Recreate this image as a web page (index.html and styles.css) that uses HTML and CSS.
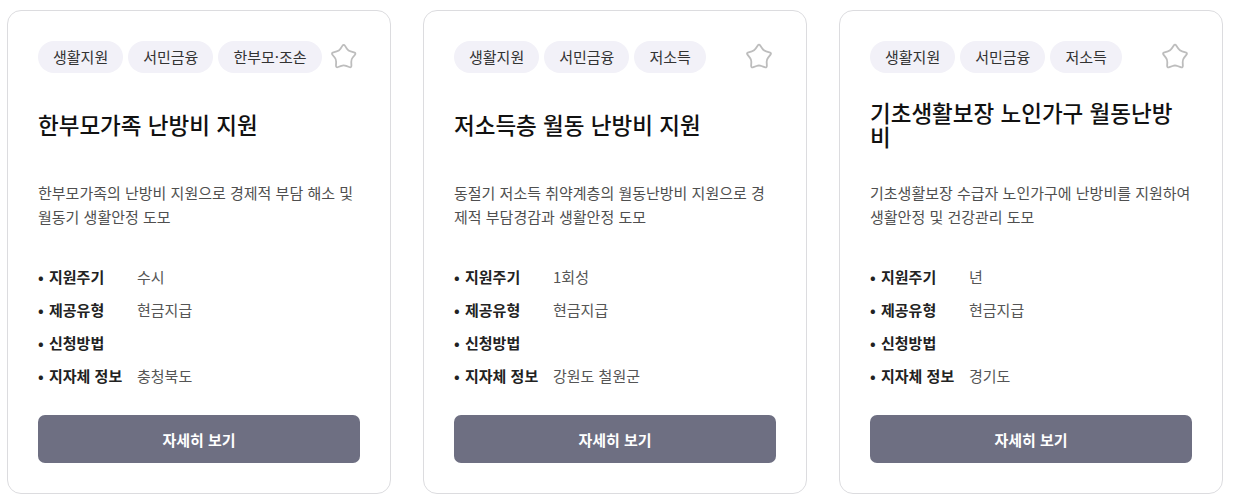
FILE: index.html
```html
<!DOCTYPE html>
<html lang="ko">
<head>
<meta charset="utf-8">
<link rel="stylesheet" href="styles.css">
</head>
<body>
<div class="cards">
  <div class="card">
    <div class="tags">
      <span class="tag">생활지원</span><span class="tag">서민금융</span><span class="tag">한부모·조손</span>
      <svg class="star" viewBox="0 0 30 30"><path d="M13.77 5.90 Q15 4 16.23 5.90 L17.88 8.44 Q19.11 10.34 21.30 10.93 L24.22 11.71 Q26.41 12.29 24.99 14.05 L23.09 16.40 Q21.66 18.16 21.78 20.43 L21.93 23.45 Q22.05 25.71 19.94 24.90 L17.12 23.81 Q15 23 12.88 23.81 L10.06 24.90 Q7.95 25.71 8.07 23.45 L8.22 20.43 Q8.34 18.16 6.91 16.40 L5.01 14.05 Q3.59 12.29 5.78 11.71 L8.70 10.93 Q10.89 10.34 12.12 8.44 Z"/></svg>
    </div>
    <div class="title-box"><h3 class="title">한부모가족 난방비 지원</h3></div>
    <p class="desc">한부모가족의 난방비 지원으로 경제적 부담 해소 및 월동기 생활안정 도모</p>
    <ul class="info">
      <li><span class="label">지원주기</span><span class="value">수시</span></li>
      <li><span class="label">제공유형</span><span class="value">현금지급</span></li>
      <li><span class="label">신청방법</span><span class="value"></span></li>
      <li><span class="label">지자체 정보</span><span class="value">충청북도</span></li>
    </ul>
    <button class="btn">자세히 보기</button>
  </div>
  <div class="card">
    <div class="tags">
      <span class="tag">생활지원</span><span class="tag">서민금융</span><span class="tag">저소득</span>
      <svg class="star" viewBox="0 0 30 30"><path d="M13.77 5.90 Q15 4 16.23 5.90 L17.88 8.44 Q19.11 10.34 21.30 10.93 L24.22 11.71 Q26.41 12.29 24.99 14.05 L23.09 16.40 Q21.66 18.16 21.78 20.43 L21.93 23.45 Q22.05 25.71 19.94 24.90 L17.12 23.81 Q15 23 12.88 23.81 L10.06 24.90 Q7.95 25.71 8.07 23.45 L8.22 20.43 Q8.34 18.16 6.91 16.40 L5.01 14.05 Q3.59 12.29 5.78 11.71 L8.70 10.93 Q10.89 10.34 12.12 8.44 Z"/></svg>
    </div>
    <div class="title-box"><h3 class="title">저소득층 월동 난방비 지원</h3></div>
    <p class="desc">동절기 저소득 취약계층의 월동난방비 지원으로 경제적 부담경감과 생활안정 도모</p>
    <ul class="info">
      <li><span class="label">지원주기</span><span class="value">1회성</span></li>
      <li><span class="label">제공유형</span><span class="value">현금지급</span></li>
      <li><span class="label">신청방법</span><span class="value"></span></li>
      <li><span class="label">지자체 정보</span><span class="value">강원도 철원군</span></li>
    </ul>
    <button class="btn">자세히 보기</button>
  </div>
  <div class="card">
    <div class="tags">
      <span class="tag">생활지원</span><span class="tag">서민금융</span><span class="tag">저소득</span>
      <svg class="star" viewBox="0 0 30 30"><path d="M13.77 5.90 Q15 4 16.23 5.90 L17.88 8.44 Q19.11 10.34 21.30 10.93 L24.22 11.71 Q26.41 12.29 24.99 14.05 L23.09 16.40 Q21.66 18.16 21.78 20.43 L21.93 23.45 Q22.05 25.71 19.94 24.90 L17.12 23.81 Q15 23 12.88 23.81 L10.06 24.90 Q7.95 25.71 8.07 23.45 L8.22 20.43 Q8.34 18.16 6.91 16.40 L5.01 14.05 Q3.59 12.29 5.78 11.71 L8.70 10.93 Q10.89 10.34 12.12 8.44 Z"/></svg>
    </div>
    <div class="title-box"><h3 class="title">기초생활보장 노인가구 월동난방비</h3></div>
    <p class="desc">기초생활보장 수급자 노인가구에 난방비를 지원하여 생활안정 및 건강관리 도모</p>
    <ul class="info">
      <li><span class="label">지원주기</span><span class="value">년</span></li>
      <li><span class="label">제공유형</span><span class="value">현금지급</span></li>
      <li><span class="label">신청방법</span><span class="value"></span></li>
      <li><span class="label">지자체 정보</span><span class="value">경기도</span></li>
    </ul>
    <button class="btn">자세히 보기</button>
  </div>
</div>
</body>
</html>
```

FILE: styles.css
```css
* { box-sizing: border-box; }
body {
  margin: 0;
  background: #fff;
  font-family: "Noto Sans CJK KR", "Noto Sans", sans-serif;
  color: #222;
}
.cards {
  display: grid;
  grid-template-columns: repeat(3, 384px);
  gap: 32px;
  padding: 10px 0 0 7px;
}
.card {
  border: 1px solid #dcdcdf;
  border-radius: 14px;
  padding: 30px 30px 30px 30px;
  display: flex;
  flex-direction: column;
  background: #fff;
}
.tags {
  display: flex;
  align-items: center;
  gap: 5px;
  height: 32px;
}
.tag {
  height: 32px;
  line-height: 32px;
  padding: 0 15px;
  border-radius: 16px;
  background: #f2f1f8;
  font-size: 15px;
  color: #333;
  white-space: nowrap;
}
.star {
  margin-left: auto;
  width: 34px;
  height: 34px;
  margin-top: -3px;
  fill: none;
  stroke: #bdbdbd;
  stroke-width: 1.6;
  stroke-linejoin: round;
}
.title-box {
  margin-top: 20px;
  height: 62px;
  display: flex;
  align-items: center;
}
.title {
  margin: 0;
  font-size: 22.5px;
  line-height: 24px;
  font-weight: 500;
  color: #111;
}
.desc {
  margin: 26px 0 0;
  font-size: 15px;
  line-height: 24px;
  min-height: 48px;
  color: #4f4f4f;
}
.info {
  list-style: none;
  margin: 31px 0 0;
  padding: 0;
}
.info li {
  display: grid;
  grid-template-columns: 99px 1fr;
  height: 33px;
  line-height: 33px;
  font-size: 15px;
}
.label {
  font-weight: 700;
  color: #222;
  white-space: nowrap;
}
.label::before {
  content: "•";
  display: inline-block;
  width: 11px;
}
.value { color: #555; }
.btn {
  margin-top: 23px;
  height: 48px;
  border: 0;
  border-radius: 7px;
  background: #6e6f82;
  color: #fff;
  font-family: inherit;
  font-size: 15px;
  font-weight: 700;
}
```
